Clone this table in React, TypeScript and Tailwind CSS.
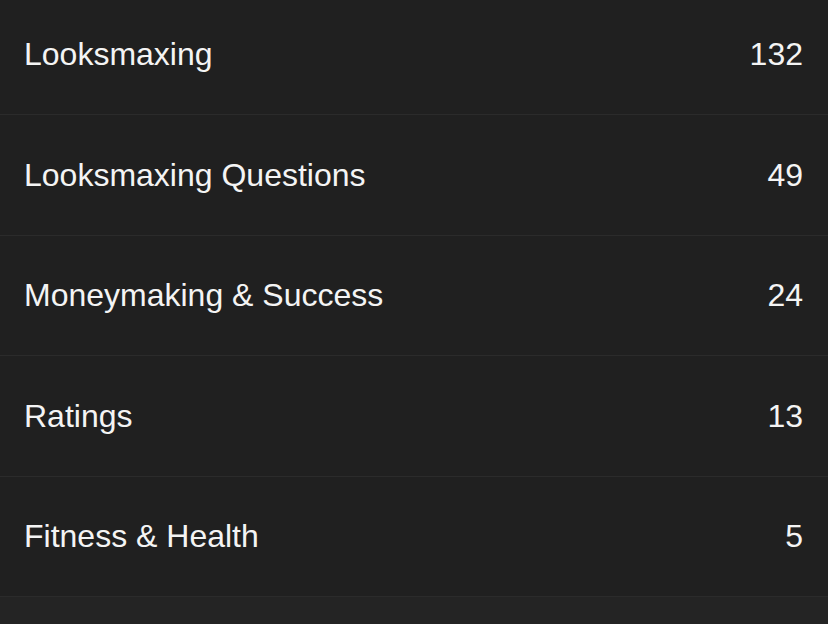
const rows = [
  { name: 'Looksmaxing', count: 132 },
  { name: 'Looksmaxing Questions', count: 49 },
  { name: 'Moneymaking & Success', count: 24 },
  { name: 'Ratings', count: 13 },
  { name: 'Fitness & Health', count: 5 },
]

export default function App() {
  return (
    <div className="w-[828px] h-[624px] overflow-hidden bg-[#242424] font-['Liberation_Sans',Arial,sans-serif]">
      <div className="-mt-[5.5px] bg-[#202020]">
        {rows.map((r) => (
          <div
            key={r.name}
            className="h-[120.5px] flex items-center justify-between pl-6 pr-[25px] border-b border-[#2b2b2b] text-[32px] text-[#f4f4f4]"
          >
            <span>{r.name}</span>
            <span>{r.count}</span>
          </div>
        ))}
      </div>
    </div>
  )
}
